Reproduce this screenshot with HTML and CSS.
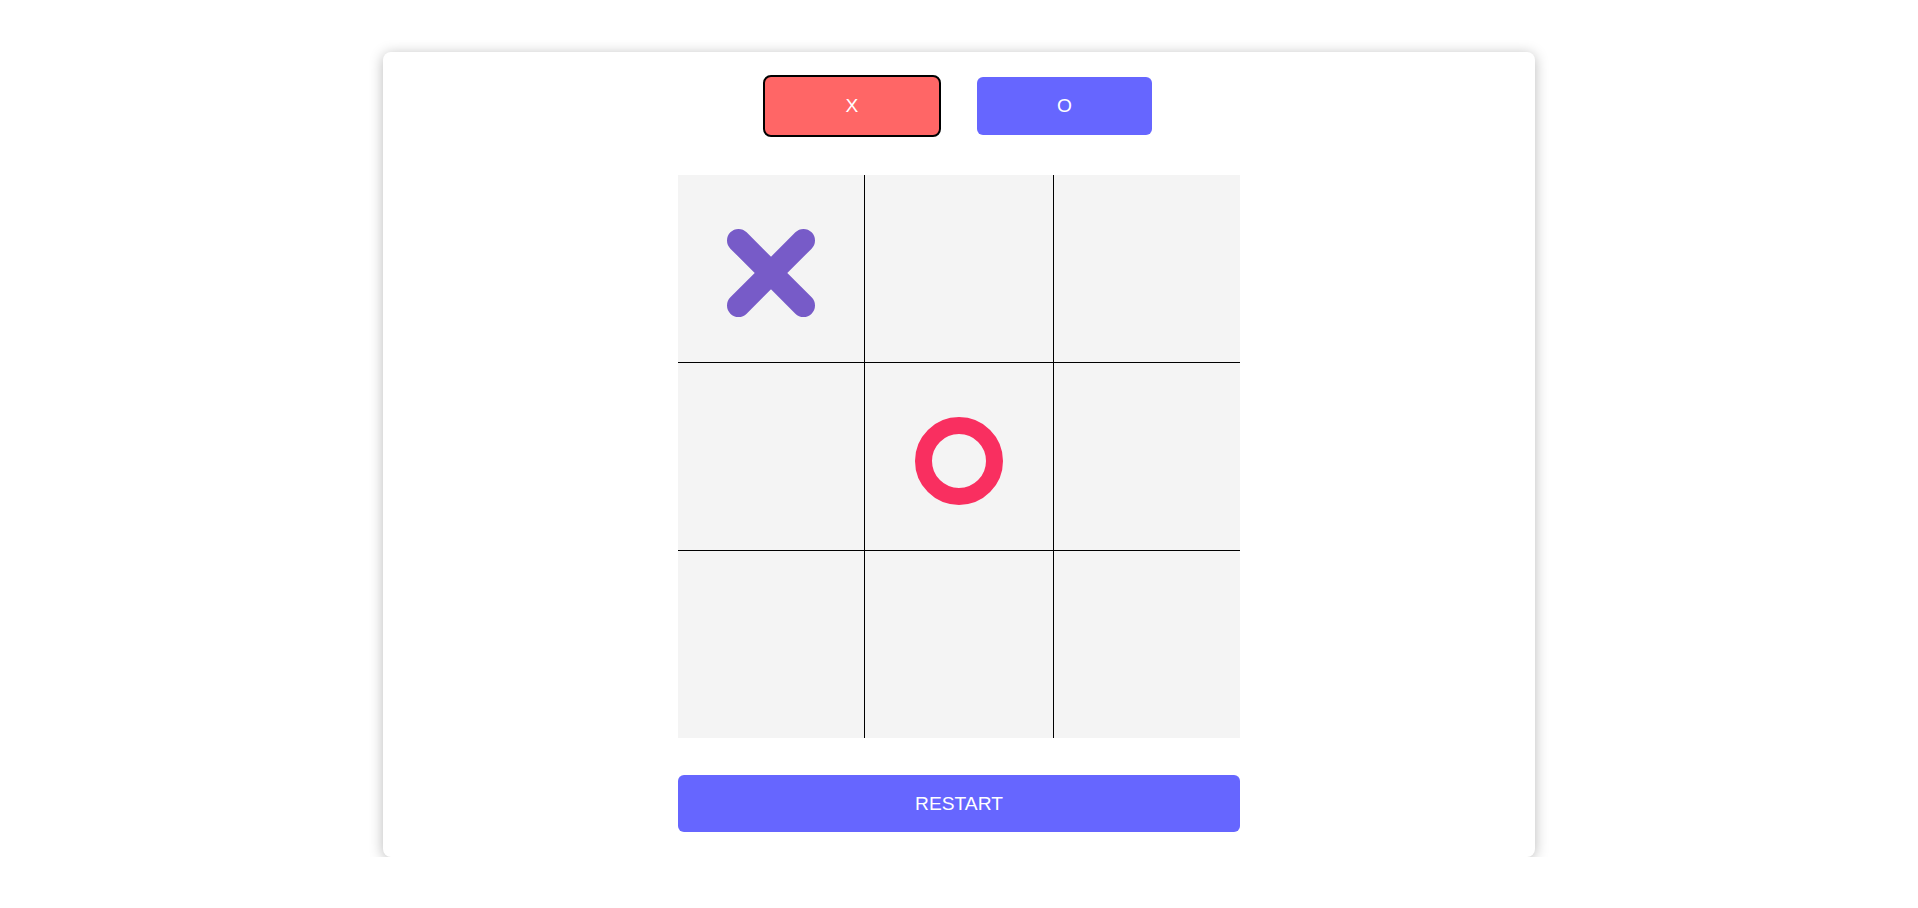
FILE: index.html
```html
<!DOCTYPE html>
<html lang="en">
<head>
<meta charset="utf-8">
<title>Tic Tac Toe</title>
<link rel="stylesheet" href="styles.css">
</head>
<body>
<main class="card">
  <div class="players">
    <button class="player player-x active">X</button>
    <button class="player player-o">O</button>
  </div>
  <div class="board">
    <div class="cell">
      <svg class="mark" width="88" height="88" viewBox="0 0 88 88"><path d="M11.5 11.5 L76.5 76.5 M76.5 11.5 L11.5 76.5" stroke="#775bc8" stroke-width="23" stroke-linecap="round" fill="none"/></svg>
    </div>
    <div class="cell"></div>
    <div class="cell"></div>
    <div class="cell"></div>
    <div class="cell">
      <svg class="mark" width="88" height="88" viewBox="0 0 88 88"><circle cx="44" cy="44" r="35.5" stroke="#f92f60" stroke-width="17" fill="none"/></svg>
    </div>
    <div class="cell"></div>
    <div class="cell"></div>
    <div class="cell"></div>
    <div class="cell"></div>
  </div>
  <button class="restart">RESTART</button>
</main>
</body>
</html>
```
FILE: styles.css
```css
* { box-sizing: border-box; }
html, body {
  margin: 0;
  padding: 0;
  background: #ffffff;
  font-family: "Liberation Sans", Arial, sans-serif;
}
body { padding-top: 52px; }
.card {
  width: 1152px;
  height: 805px;
  margin: 0 auto;
  background: #fff;
  border-radius: 8px;
  box-shadow: 0 2px 14px rgba(0, 0, 0, 0.28);
  padding: 23px 0 25px;
  display: flex;
  flex-direction: column;
  align-items: center;
}
.players {
  display: flex;
  align-items: center;
  gap: 36px;
  height: 62px;
  margin-left: -3px;
}
.player {
  border: none;
  color: #fff;
  font-family: inherit;
  font-size: 19.2px;
  padding: 0;
  cursor: pointer;
}
.player-x {
  width: 178px;
  height: 62px;
  background: #ff6666;
  border: 2px solid #000;
  border-radius: 8px;
}
.player-o {
  width: 175px;
  height: 58px;
  background: #6666ff;
  border-radius: 6px;
}
.board {
  margin-top: 38px;
  width: 562px;
  height: 563px;
  background: #f4f4f4;
  display: grid;
  grid-template-columns: 187px 189px 186px;
  grid-template-rows: 188px 188px 187px;
}
.cell {
  display: flex;
  align-items: center;
  justify-content: center;
  padding-top: 9px;
}
.cell:nth-child(3n+1), .cell:nth-child(3n+2) { border-right: 1px solid #000; }
.cell:nth-child(-n+6) { border-bottom: 1px solid #000; }
.mark { display: block; }
.restart {
  margin-top: 37px;
  width: 562px;
  height: 57px;
  border: none;
  border-radius: 6px;
  background: #6666ff;
  color: #fff;
  font-family: inherit;
  font-size: 19.2px;
  cursor: pointer;
}
```
